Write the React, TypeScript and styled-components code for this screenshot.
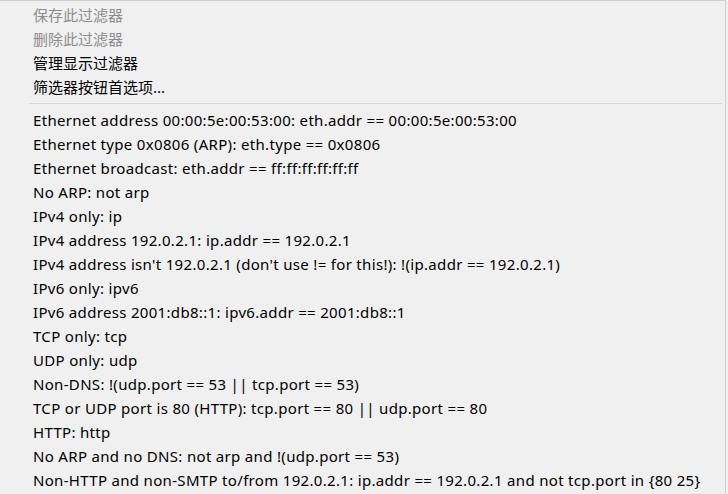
import styled, { createGlobalStyle } from 'styled-components';

const Global = createGlobalStyle`
  html, body {
    margin: 0;
    padding: 0;
    background: #f0f0f0;
    overflow: hidden;
  }
`;

const Menu = styled.div`
  width: 726px;
  height: 493px;
  box-sizing: border-box;
  background: #f0f0f0;
  border-top: 1px solid #cfcfcf;
  border-right: 1px solid #cfcfcf;
  padding-top: 2px;
  font-family: "Noto Sans", "Noto Sans CJK SC", sans-serif;
  font-size: 15px;
  color: #000;
`;

const Item = styled.div<{ $disabled?: boolean; $latin?: boolean }>`
  height: 24px;
  line-height: 24px;
  padding-left: 33px;
  white-space: nowrap;
  letter-spacing: ${(p) => (p.$latin ? '0.32px' : '0')};
  color: ${(p) => (p.$disabled ? '#8d8d8d' : '#000')};
`;

const Separator = styled.div`
  height: 1px;
  margin: 4px 3px 4px 29px;
  background: #d7d7d7;
`;

const actions = [
  { label: '保存此过滤器', disabled: true },
  { label: '删除此过滤器', disabled: true },
  { label: '管理显示过滤器' },
  { label: '筛选器按钮首选项...' },
];

const filters = [
  'Ethernet address 00:00:5e:00:53:00: eth.addr == 00:00:5e:00:53:00',
  'Ethernet type 0x0806 (ARP): eth.type == 0x0806',
  'Ethernet broadcast: eth.addr == ff:ff:ff:ff:ff:ff',
  'No ARP: not arp',
  'IPv4 only: ip',
  'IPv4 address 192.0.2.1: ip.addr == 192.0.2.1',
  "IPv4 address isn't 192.0.2.1 (don't use != for this!): !(ip.addr == 192.0.2.1)",
  'IPv6 only: ipv6',
  'IPv6 address 2001:db8::1: ipv6.addr == 2001:db8::1',
  'TCP only: tcp',
  'UDP only: udp',
  'Non-DNS: !(udp.port == 53 || tcp.port == 53)',
  'TCP or UDP port is 80 (HTTP): tcp.port == 80 || udp.port == 80',
  'HTTP: http',
  'No ARP and no DNS: not arp and !(udp.port == 53)',
  'Non-HTTP and non-SMTP to/from 192.0.2.1: ip.addr == 192.0.2.1 and not tcp.port in {80 25}',
];

export default function App() {
  return (
    <>
      <Global />
      <Menu>
        {actions.map((a) => (
          <Item key={a.label} $disabled={a.disabled}>
            {a.label}
          </Item>
        ))}
        <Separator />
        {filters.map((f) => (
          <Item key={f} $latin>
            {f}
          </Item>
        ))}
      </Menu>
    </>
  );
}
